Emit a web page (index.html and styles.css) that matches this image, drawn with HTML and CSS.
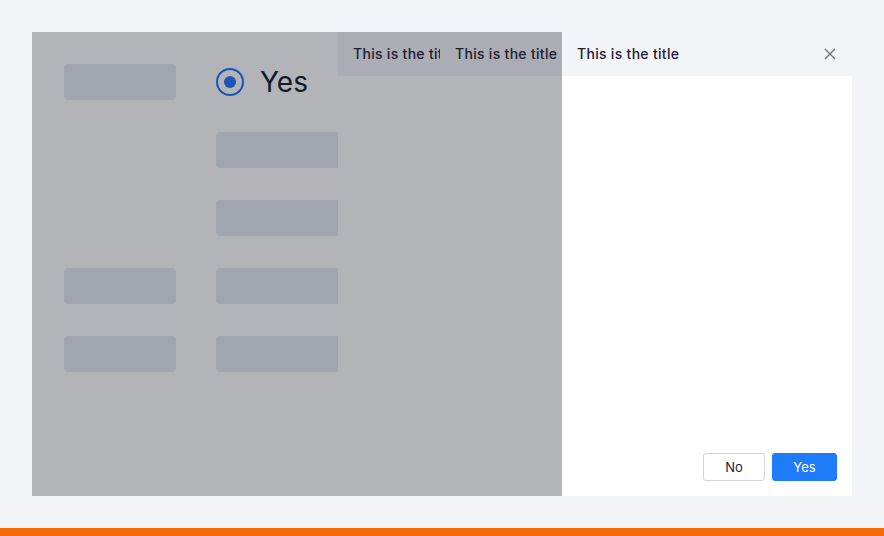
FILE: index.html
```html
<!DOCTYPE html>
<html lang="en">
<head>
<meta charset="utf-8">
<title>Drawers</title>
<link rel="stylesheet" href="styles.css">
</head>
<body>
<div class="page">
  <div class="frame">
    <div class="form">
      <div class="row">
        <div class="sk sk-label"></div>
        <label class="radio"><span class="radio-dot"></span><span class="radio-text">Yes</span></label>
      </div>
      <div class="row">
        <div class="spacer"></div>
        <div class="sk sk-field"></div>
      </div>
      <div class="row">
        <div class="spacer"></div>
        <div class="sk sk-field"></div>
      </div>
      <div class="row">
        <div class="sk sk-label"></div>
        <div class="sk sk-field"></div>
      </div>
      <div class="row">
        <div class="sk sk-label"></div>
        <div class="sk sk-field"></div>
      </div>
    </div>

    <div class="drawer drawer-1">
      <div class="drawer-head"><span class="drawer-title">This is the title</span></div>
      <div class="drawer-body"></div>
    </div>
    <div class="drawer drawer-2">
      <div class="drawer-head"><span class="drawer-title">This is the title</span></div>
      <div class="drawer-body"></div>
    </div>

    <div class="mask"></div>

    <div class="drawer drawer-3">
      <div class="drawer-head">
        <span class="drawer-title">This is the title</span>
        <button class="close" aria-label="Close">
          <svg width="12" height="12" viewBox="0 0 12 12"><path d="M1 1L11 11M11 1L1 11" stroke="#6b6e78" stroke-width="1.3" fill="none"/></svg>
        </button>
      </div>
      <div class="drawer-body"></div>
      <div class="drawer-foot">
        <button class="btn btn-default">No</button>
        <button class="btn btn-primary">Yes</button>
      </div>
    </div>
  </div>
</div>
<div class="bar"></div>
</body>
</html>
```
FILE: styles.css
```css
* { box-sizing: border-box; }
html, body { margin: 0; padding: 0; }
body {
  background: #f3f4f8;
  font-family: Inter, "Noto Sans", "Liberation Sans", sans-serif;
  color: #1d2033;
  width: 884px;
  height: 536px;
  overflow: hidden;
}
.page { padding: 32px; }
.frame {
  position: relative;
  width: 820px;
  height: 464px;
  background: #ffffff;
  overflow: hidden;
}
.form {
  padding: 32px;
  display: flex;
  flex-direction: column;
  gap: 32px;
}
.row {
  display: flex;
  align-items: center;
  gap: 40px;
  height: 36px;
}
.sk {
  height: 36px;
  background: #e6e9ef;
  border-radius: 4px;
}
.sk-label, .spacer { width: 112px; flex: none; }
.sk-field { width: 240px; }
.radio {
  display: flex;
  align-items: center;
  gap: 16px;
}
.radio-dot {
  width: 28px;
  height: 28px;
  border: 2px solid #1a6fff;
  border-radius: 50%;
  display: flex;
  align-items: center;
  justify-content: center;
}
.radio-dot::after {
  content: "";
  width: 12px;
  height: 12px;
  border-radius: 50%;
  background: #1a6fff;
}
.radio-text {
  font-size: 28px;
  line-height: 36px;
  color: #10132a;
}
.drawer {
  position: absolute;
  top: 0;
  right: 0;
  bottom: 0;
  display: flex;
  flex-direction: column;
  background: #ffffff;
}
.drawer-1 { width: 514px; }
.drawer-2 { width: 412px; }
.drawer-3 { width: 290px; }
.drawer-head {
  height: 44px;
  flex: none;
  background: #f3f4f8;
  display: flex;
  align-items: center;
  justify-content: space-between;
  padding: 0 15px;
}
.drawer-title {
  font-size: 14px;
  font-weight: 500;
  letter-spacing: 0.3px;
  color: #1d2033;
  white-space: nowrap;
  margin-top: -1px;
}
.drawer-body { flex: 1; }
.close {
  border: 0;
  background: none;
  padding: 0;
  width: 12px;
  height: 12px;
  margin-right: 1px;
  display: flex;
}
.drawer-foot {
  display: flex;
  justify-content: flex-end;
  gap: 7px;
  padding: 0 15px 15px;
}
.btn {
  height: 28px;
  border-radius: 3px;
  font-family: Inter, "Noto Sans", "Liberation Sans", sans-serif;
  font-size: 13px;
  padding: 0;
}
.btn-default {
  width: 62px;
  background: #ffffff;
  border: 1px solid #d3d6dd;
  color: #1d2033;
}
.btn-primary {
  width: 65px;
  background: #1f7cf8;
  border: 1px solid #1f7cf8;
  color: #ffffff;
}
.mask {
  position: absolute;
  inset: 0;
  background: rgba(29, 35, 48, 0.34);
}
.bar {
  height: 8px;
  background: #f56b0b;
}
```
